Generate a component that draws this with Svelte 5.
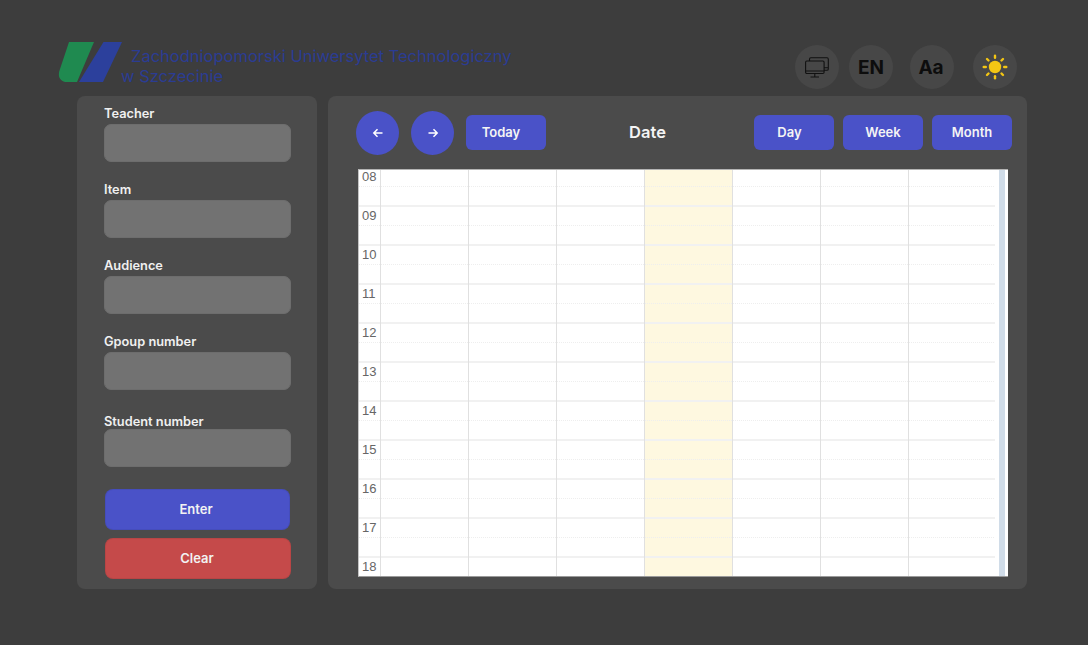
<script>
  const fields = [
    { label: 'Teacher', cls: '' },
    { label: 'Item', cls: '' },
    { label: 'Audience', cls: '' },
    { label: 'Gpoup number', cls: '' },
    { label: 'Student number', cls: 'last' }
  ];
  const hours = ['08', '09', '10', '11', '12', '13', '14', '15', '16', '17', '18'];
  const days = [0, 1, 2, 3, 4, 5, 6];
  const rays = [0, 45, 90, 135, 180, 225, 270, 315];
</script>

<div class="page">
  <header class="top">
    <div class="brand">
      <svg class="logo" width="64" height="42" viewBox="0 0 64 42" aria-hidden="true">
        <path d="M11 1H36L19 41H9C2 41 -1 35 2 28Z" fill="#1f8a50" />
        <path d="M45.500 1H64L45 41H21Z" fill="#2c409c" />
      </svg>
      <div class="brand-text">
        <div class="line1">Zachodniopomorski Uniwersytet Technologiczny</div>
        <div class="line2">w Szczecinie</div>
      </div>
    </div>
    <div class="tools">
      <div class="tool t1">
        <svg width="24" height="21" viewBox="0 0 24 21" fill="none" stroke="#111" stroke-width="1.100" aria-hidden="true">
          <rect x="0.600" y="4" width="18.500" height="12.500" rx="1.200" />
          <path d="M0.600 14H19M9.800 16.500V19.500M5.500 20H14" />
          <path d="M4.500 4V2.200C4.500 1.400 5 0.800 5.800 0.800H22C22.800 0.800 23.300 1.400 23.300 2.200V12C23.300 12.800 22.800 13.300 22 13.300H19M19 10.800H23.300" />
        </svg>
      </div>
      <div class="tool t2">EN</div>
      <div class="tool t3">Aa</div>
      <div class="tool t4">
        <svg width="26" height="26" viewBox="0 0 26 26" aria-hidden="true">
          <circle cx="13" cy="13" r="6.200" fill="#f4c614" />
          {#each rays as r}
            <rect x="11.800" y="0.500" width="2.400" height="4.500" rx="1.200" fill="#f4c614" transform="rotate({r} 13 13)" />
          {/each}
        </svg>
      </div>
    </div>
  </header>

  <main class="content">
    <aside class="side">
      {#each fields as f}
        <div class="field {f.cls}">
          <div class="flabel">{f.label}</div>
          <div class="finput"></div>
        </div>
      {/each}
      <button class="act enter">Enter</button>
      <button class="act clear">Clear</button>
    </aside>

    <section class="cal-panel">
      <div class="bar">
        <button class="round">
          <svg width="12" height="12" viewBox="0 0 12 12" fill="none" stroke="#fff" stroke-width="1.500" aria-hidden="true"><path d="M10.500 6H2M5.500 2.200L1.800 6L5.500 9.800" /></svg>
        </button>
        <button class="round r2">
          <svg width="12" height="12" viewBox="0 0 12 12" fill="none" stroke="#fff" stroke-width="1.500" aria-hidden="true"><path d="M1.500 6H10M6.500 2.200L10.200 6L6.500 9.800" /></svg>
        </button>
        <button class="pill today">Today</button>
        <div class="date">Date</div>
        <div class="views">
          <button class="pill day">Day</button>
          <button class="pill">Week</button>
          <button class="pill">Month</button>
        </div>
      </div>

      <div class="cal">
        <div class="grid">
          <div class="col gutter">
            {#each hours as h, i}
              <div class="hour" class:first={i === 0}>
                <span class="hlabel">{h}</span>
                <div class="slot a"></div>
                <div class="slot b"></div>
              </div>
            {/each}
          </div>
          {#each days as d}
            <div class="col" class:now={d === 3} class:end={d === 6}>
              {#each hours as h, i}
                <div class="hour" class:first={i === 0}>
                  <div class="slot a"></div>
                  <div class="slot b"></div>
                </div>
              {/each}
            </div>
          {/each}
        </div>
        <div class="scroll"></div>
      </div>
    </section>
  </main>
</div>

<style>
  :global(body) {
    margin: 0;
    background: #3d3d3d;
  }
  .page {
    width: 1088px;
    height: 645px;
    overflow: hidden;
    background: #3d3d3d;
    font-family: Inter, "Liberation Sans", sans-serif;
    box-sizing: border-box;
    padding-top: 41px;
  }
  .top {
    display: flex;
    justify-content: space-between;
    height: 55px;
    padding: 0 71px 0 58px;
  }
  .brand {
    display: flex;
    height: 42px;
    overflow: hidden;
    position: relative;
  }
  .logo {
    flex: none;
  }
  .brand-text {
    margin-left: -1px;
    color: #2b3c93;
    font-size: 16.500px;
    line-height: 20px;
    padding-top: 5px;
  }
  .line1 {
    padding-left: 10px;
    white-space: nowrap;
  }
  .tools {
    display: flex;
    padding-top: 4px;
  }
  .tool {
    width: 44px;
    height: 44px;
    border-radius: 50%;
    background: #474747;
    display: flex;
    align-items: center;
    justify-content: center;
    color: #0d0d0d;
    font-size: 19px;
    font-weight: 700;
  }
  .t2 {
    margin-left: 10px;
  }
  .t3 {
    margin-left: 17px;
    padding-right: 2px;
    box-sizing: border-box;
  }
  .t4 {
    margin-left: 19px;
  }
  .content {
    display: flex;
    gap: 11px;
    padding-left: 77px;
  }
  .side {
    width: 240px;
    height: 493px;
    box-sizing: border-box;
    padding: 10px 26px 0 27px;
    background: #4b4b4b;
    border-radius: 8px;
  }
  .field {
    height: 76px;
  }
  .field.last {
    height: 79px;
    padding-top: 4px;
    box-sizing: border-box;
  }
  .flabel {
    color: #f0f0f0;
    font-size: 12.800px;
    font-weight: 600;
    line-height: 16px;
    height: 18px;
  }
  .last .flabel {
    height: 15px;
  }
  .finput {
    height: 38px;
    box-sizing: border-box;
    background: #727272;
    border: 1px solid #6d6d6d;
    border-radius: 7px;
  }
  .act {
    display: block;
    width: 186px;
    height: 41px;
    margin-left: 1px;
    border: 1px solid rgba(0, 0, 0, 0.06);
    border-radius: 8px;
    color: #f2f2f2;
    font: 600 13px Inter, "Liberation Sans", sans-serif;
  }
  .enter {
    width: 185px;
    background: #4a52c8;
    margin-bottom: 8px;
    padding: 0 3px 2px 0;
  }
  .clear {
    background: #c54a4a;
    padding: 0 2px 2px 0;
  }
  .cal-panel {
    width: 699px;
    height: 493px;
    box-sizing: border-box;
    padding: 15px 15px 0 28px;
    background: #4b4b4b;
    border-radius: 8px;
  }
  .bar {
    display: flex;
    align-items: flex-start;
    height: 44px;
  }
  button {
    cursor: pointer;
  }
  .round {
    width: 43px;
    height: 44px;
    padding: 0;
    border: 0;
    border-radius: 50%;
    background: #4a52c8;
    display: flex;
    align-items: center;
    justify-content: center;
  }
  .r2 {
    margin-left: 12px;
  }
  .pill {
    width: 80px;
    height: 35px;
    padding: 0 0 2px;
    border: 0;
    border-radius: 6px;
    background: #4a52c8;
    color: #f4f4f4;
    font: 600 13px Inter, "Liberation Sans", sans-serif;
  }
  .today {
    margin: 4px 0 0 12px;
    padding-right: 10px;
  }
  .date {
    width: 208px;
    padding: 11px 5px 0 0;
    box-sizing: border-box;
    text-align: center;
    color: #f4f4f4;
    font-size: 16.500px;
    line-height: 20px;
    font-weight: 600;
  }
  .views {
    display: flex;
    gap: 9px;
    margin-top: 4px;
  }
  .day {
    padding-right: 9px;
  }
  .cal {
    display: flex;
    width: 650px;
    height: 408px;
    margin: 14px 0 0 2px;
    box-sizing: border-box;
    background: #fff;
    border-top: 1px solid #b4b4b4;
    border-left: 1px solid #c4c4c4;
    border-bottom: 1px solid #9a9a9a;
    overflow: hidden;
  }
  .grid {
    display: flex;
    width: 636px;
    height: 407px;
    overflow: hidden;
  }
  .col {
    width: 88px;
    flex: none;
    box-sizing: border-box;
    border-right: 1px solid #e0e0e0;
  }
  .col.end {
    width: 87px;
    border-right: 0;
  }
  .col.now {
    background: #fef8e0;
  }
  .gutter {
    width: 22px;
  }
  .hour {
    position: relative;
    height: 39px;
  }
  .hour.first {
    height: 37px;
  }
  .slot {
    box-sizing: border-box;
  }
  .slot.a {
    height: 19px;
    border-bottom: 1px dotted #eeeeee;
  }
  .first .slot.a {
    height: 17px;
  }
  .slot.b {
    height: 20px;
    border-bottom: 2px solid #f1f1f1;
  }
  .hlabel {
    position: absolute;
    left: 3px;
    top: 2px;
    color: #666;
    font: 13px/14px "Liberation Sans", sans-serif;
  }
  .first .hlabel {
    top: 0;
  }
  .scroll {
    width: 6px;
    margin-left: 4px;
    background: #d0dce8;
    flex: none;
  }
</style>
